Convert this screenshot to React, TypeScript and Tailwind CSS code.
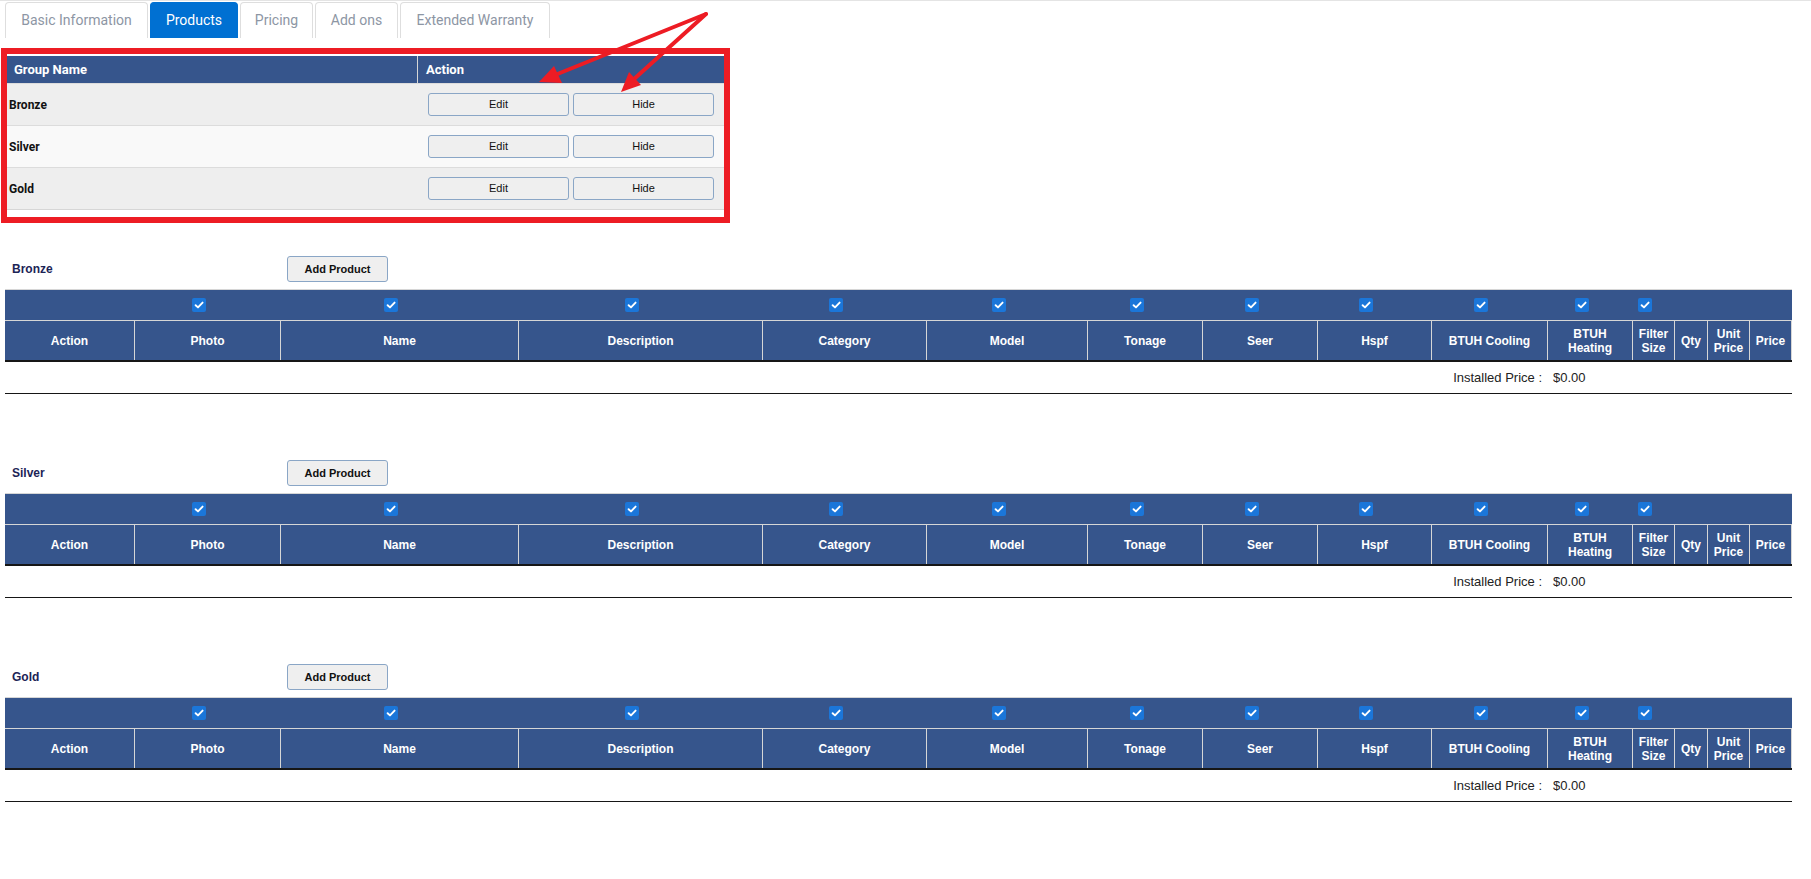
import React from "react";

const cols = [
  { label: "Action", cb: false },
  { label: "Photo", cb: true },
  { label: "Name", cb: true },
  { label: "Description", cb: true },
  { label: "Category", cb: true },
  { label: "Model", cb: true },
  { label: "Tonage", cb: true },
  { label: "Seer", cb: true },
  { label: "Hspf", cb: true },
  { label: "BTUH Cooling", cb: true },
  { label: "BTUH Heating", cb: true },
  { label: "Filter Size", cb: true },
  { label: "Qty", cb: false },
  { label: "Unit Price", cb: false },
  { label: "Price", cb: false },
];

const gridCols =
  "grid grid-cols-[129px_146px_238px_244px_164px_161px_115px_115px_114px_116px_85px_42px_33px_42px_43px]";

function CheckBox() {
  return (
    <span className="mr-[16px] flex h-[14px] w-[14px] items-center justify-center rounded-[2px] bg-[#1b76d9]">
      <svg width="10" height="10" viewBox="0 0 10 10">
        <path d="M1.6 5.2 L4 7.4 L8.6 2.6" fill="none" stroke="white" strokeWidth="1.9" strokeLinecap="round" strokeLinejoin="round" />
      </svg>
    </span>
  );
}

function Section({ name }: { name: string }) {
  return (
    <div className="ml-[5px] w-[1787px]">
      <div className="flex h-[26px] items-center">
        <div className="w-[282px] pl-[7px] text-[12px] font-bold text-[#1c2456]">{name}</div>
        <button className="h-[26px] w-[101px] rounded-[3px] border border-[#8aa6c6] bg-[#efefef] text-[11px] font-bold text-[#111]">
          Add Product
        </button>
      </div>
      <div className="mt-[7px] border-t border-[#d6d6d6]">
        <div className={`${gridCols} h-[30px] bg-[#36558c]`}>
          {cols.map((c, i) => (
            <div key={i} className="flex items-center justify-center">
              {c.cb ? <CheckBox /> : null}
            </div>
          ))}
        </div>
        <div className={`${gridCols} h-[42px] border-t border-b-2 border-t-[#d6d6d6] border-b-[#161616] bg-[#36558c]`}>
          {cols.map((c, i) => (
            <div
              key={i}
              className={`flex items-center justify-center px-[2px] text-center text-[12px] font-bold leading-[14px] text-white ${
                i > 0 ? "border-l border-[#d6d6d6]" : ""
              } ${i === cols.length - 1 ? "border-r border-[#d6d6d6]" : ""}`}
            >
              {c.label}
            </div>
          ))}
        </div>
        <div className="flex h-[32px] items-center border-b border-[#161616] text-[13px] text-[#222]">
          <div className="w-[1537px] text-right">Installed Price :</div>
          <div className="pl-[11px]">$0.00</div>
        </div>
      </div>
    </div>
  );
}

const tabs = [
  { label: "Basic Information", w: "w-[143px]", active: false },
  { label: "Products", w: "w-[88px]", active: true },
  { label: "Pricing", w: "w-[73px]", active: false },
  { label: "Add ons", w: "w-[83px]", active: false },
  { label: "Extended Warranty", w: "w-[150px]", active: false },
];

const groups = ["Bronze", "Silver", "Gold"];

export default function App() {
  return (
    <div className="relative min-h-[879px] w-[1811px] bg-white font-['Liberation_Sans',Arial,sans-serif]">
      <div className="h-px bg-[#e4e4e4]" />
      <div className="mt-px flex gap-[2px] pl-[5px]">
        {tabs.map((t) => (
          <div
            key={t.label}
            className={`flex h-[36px] items-center justify-center rounded-t-[4px] border border-b-0 font-['Roboto',sans-serif] text-[14px] ${t.w} ${
              t.active ? "border-[#0070d2] bg-[#0070d2] text-white" : "border-[#dedede] bg-white text-[#8d96a4]"
            }`}
          >
            {t.label}
          </div>
        ))}
      </div>

      <div className="ml-px mt-[10px] w-[729px] border-[6px] border-[#ed1c24] bg-white pt-[2px]">
        <div className="grid grid-cols-[410px_307px] h-[27px] bg-[#36558c] font-['Roboto',sans-serif] text-[13px] font-bold text-white">
          <div className="flex items-center pl-[7px]">Group Name</div>
          <div className="flex items-center border-l border-[#d6d6d6] pl-[8px]">Action</div>
        </div>
        {groups.map((g, i) => (
          <div
            key={g}
            className={`grid grid-cols-[410px_307px] h-[42px] border-t border-[#dcdcdc] ${i % 2 === 1 ? "bg-[#f9f9f9]" : "bg-[#eeeeee]"}`}
          >
            <div className="flex items-center pl-[2px] font-['Roboto',sans-serif] text-[12px] font-bold text-[#111]">{g}</div>
            <div className="flex items-center gap-[4px] pl-[11px]">
              <button className="h-[23px] w-[141px] rounded-[3px] border border-[#8aa6c6] bg-[#efefef] text-[11px] text-[#111]">
                Edit
              </button>
              <button className="h-[23px] w-[141px] rounded-[3px] border border-[#8aa6c6] bg-[#efefef] text-[11px] text-[#111]">
                Hide
              </button>
            </div>
          </div>
        ))}
        <div className="h-[8px] border-t border-[#d6d6d6] bg-white" />
      </div>

      <div className="mt-[33px] flex flex-col gap-[66px]">
        {groups.map((g) => (
          <Section key={g} name={g} />
        ))}
      </div>

      <svg className="pointer-events-none absolute left-0 top-0" width="740" height="110" viewBox="0 0 740 110">
        <g stroke="#ed1c24" strokeWidth="4" strokeLinecap="round" fill="none">
          <line x1="706" y1="14" x2="555" y2="75" />
          <line x1="706" y1="14" x2="633" y2="80" />
        </g>
        <g fill="#ed1c24">
          <polygon points="539,82 562,83 554,66" />
          <polygon points="621,92 641,85 629,72" />
        </g>
      </svg>
    </div>
  );
}
